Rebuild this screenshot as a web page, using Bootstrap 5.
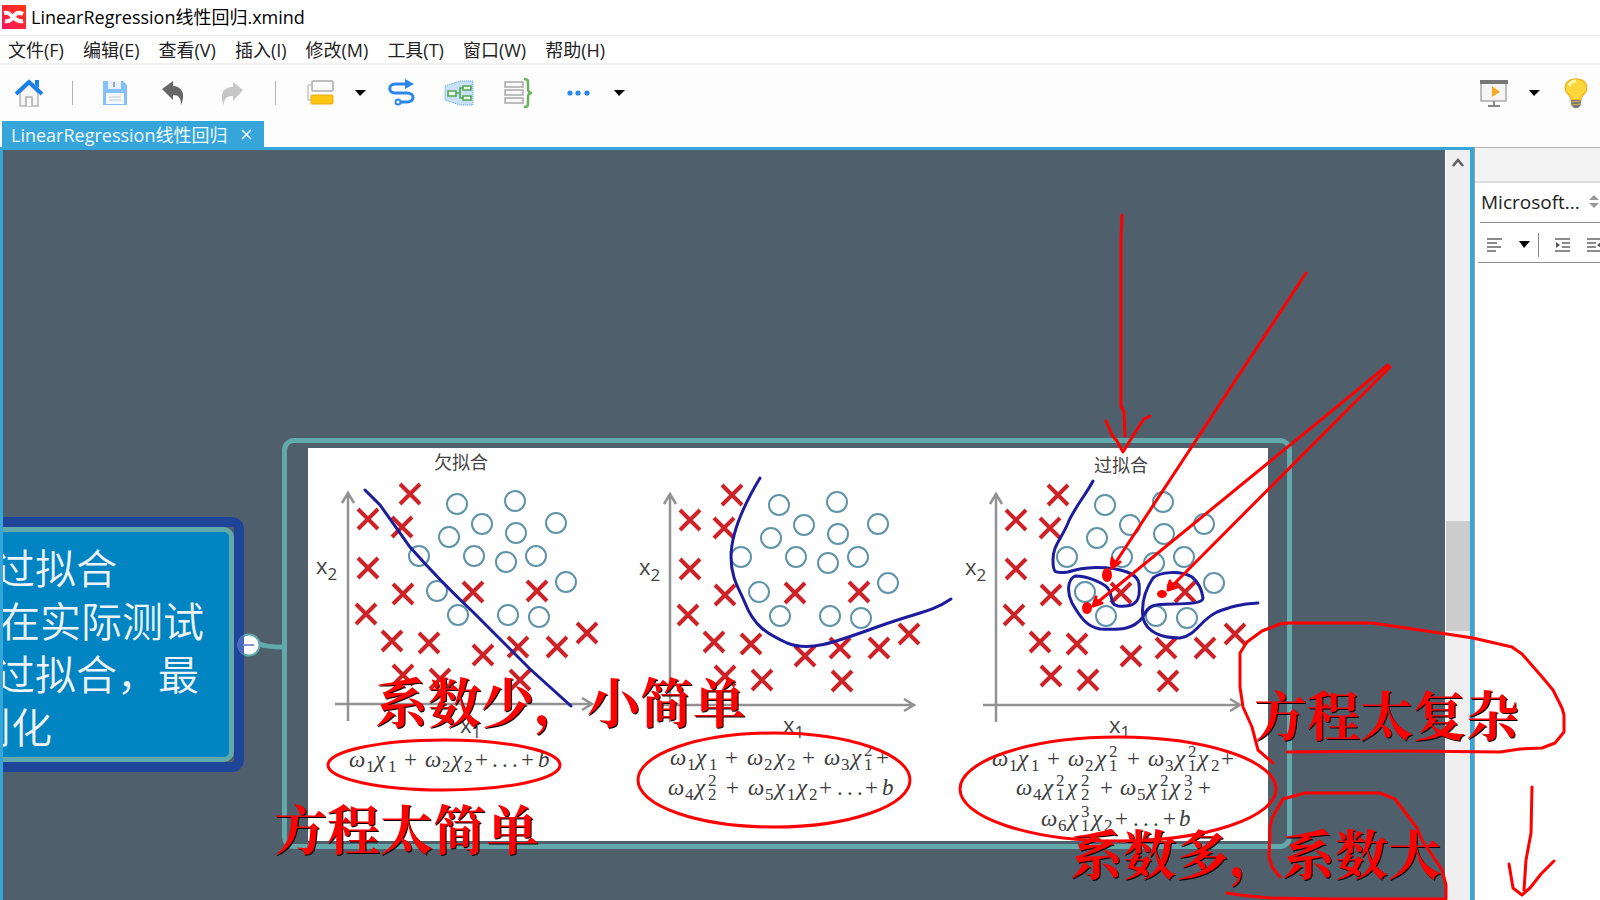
<!DOCTYPE html>
<html lang="zh-CN">
<head>
<meta charset="utf-8">
<meta name="viewport" content="width=device-width, initial-scale=1">
<title>LinearRegression线性回归.xmind</title>
<link href="https://cdn.jsdelivr.net/npm/bootstrap@5.3.0/dist/css/bootstrap.min.css" rel="stylesheet">
<style>
  body { font-family: "Open Sans", "Noto Sans CJK SC", sans-serif; font-size: 18px; line-height: 24px; color: #000; background: #fff; }
  .titlebar { height: 35px; padding: 0 0 2px 2px; gap: 5px; }
  .menubar { height: 30px; padding-left: 8px; gap: 19px; border-top: 1px solid #e8e8e8; border-bottom: 2px solid #f0f0f0; }
  .menubar a { color: #222; }
  .toolbar { height: 56px; padding-left: 14px; padding-right: 12px; background: #fdfdfd; }
  .tools { gap: 28px; }
  .tools button, .ends button, .panel button { border: 0; background: none; padding: 0; display: flex; }
  .pair { gap: 20px; }
  .rule { width: 1px; height: 24px; background: #b4b4b4; }
  .rule-dark { background: #888; }
  .tabs { height: 26px; padding-left: 2px; background: #fdfdfd; }
  .doc-tab { background: #35a5da; color: #f2fafe; padding: 1px 11px 0 9px; gap: 14px; }
  .doc-tab button { border: 0; background: none; padding: 0; display: flex; }
  .work { overflow: hidden; }
  .editor { border: solid #35a5da; border-width: 3px 4px 0 3px; }
  .board { background: #505f6c; overflow: hidden; min-width: 0; }
  .vscroll { width: 25px; background: #efefef; border-left: 1px solid #fff; }
  .thumb { height: 110px; margin-top: 353px; background: #cdcdcd; }
  .panel { width: 126px; border-left: 1px solid #a0a0a0; overflow: hidden; }
  .panel-head { height: 36px; background: #f3f3f3; border-top: 1px solid #b4b4b4; border-bottom: 2px solid #ddd; }
  .font-row { height: 40px; margin-left: 5px; padding-bottom: 2px; padding-left: 1px; border-bottom: 1px solid #909090; font-size: 19px; }
  .font-row button { color: #222; }
  .format-row { height: 40px; width: 140px; margin-left: 3px; padding-top: 4px; padding-left: 9px; border-bottom: 1px solid #909090; }
  .topic { left: -40px; top: 367px; width: 281px; border: 10px solid #1f4598; border-radius: 12px; background: #505f6c; }
  .topic-body { border: 5px solid #61a9ab; border-radius: 10px; background: #0084c2; color: #f0f4f8; font-size: 41px; line-height: 53px; font-weight: 350; padding: 10px 0 3px 16px; }
  .topic-body div { white-space: nowrap; }
  .shift { padding-left: 5px; }
  .outdent { margin-left: -24px; }
  .figure-box { left: 279px; top: 288px; width: 1010px; height: 411px; border: 5px solid #61a9ab; border-radius: 12px; padding: 5px 21px; }
  .ink { left: 0; top: 0; pointer-events: none; }
  .sans { font-family: "Open Sans", "Noto Sans CJK SC", sans-serif; fill: #444; }
  .fm { font-family: "Liberation Serif", serif; font-style: italic; font-size: 23px; fill: #3c3c3c; }
  .fm .idx { font-style: normal; font-size: 17px; }
  .fm .up { font-style: normal; }
  .note { font-family: "Noto Serif CJK SC", "Noto Sans CJK SC", serif; font-weight: 700; font-size: 53px; fill: #f00; text-shadow: 1px 1px 0 #000; }
</style>
</head>
<body>
<div class="d-flex flex-column vh-100 overflow-hidden">
  <header class="titlebar d-flex align-items-center">
    <svg width="24" height="24" viewBox="0 0 24 24"><defs><linearGradient id="lg" x1="0" y1="1" x2="1" y2="0"><stop offset="0" stop-color="#ff1260"/><stop offset="1" stop-color="#ff3a10"/></linearGradient></defs><path fill="url(#lg)" d="M0 0h24v24H0z"/><path d="M2 8c4-1 6 1 9 4s6 5 10 4M3 16c5 1 7-2 9-5s5-4 9-2" fill="none" stroke="#fff" stroke-width="4"/></svg>
    <span>LinearRegression线性回归.xmind</span>
  </header>
  <nav class="menubar d-flex align-items-center">
    <a class="text-decoration-none" href="#">文件(F)</a><a class="text-decoration-none" href="#">编辑(E)</a><a class="text-decoration-none" href="#">查看(V)</a><a class="text-decoration-none" href="#">插入(I)</a><a class="text-decoration-none" href="#">修改(M)</a><a class="text-decoration-none" href="#">工具(T)</a><a class="text-decoration-none" href="#">窗口(W)</a><a class="text-decoration-none" href="#">帮助(H)</a>
  </nav>
  <div class="toolbar d-flex align-items-center justify-content-between">
    <div class="tools d-flex align-items-center">
      <button aria-label="主页"><svg width="30" height="30" viewBox="0 0 30 30"><path d="M6 15v13h18V15l-9-9z" fill="#f6f6f6" stroke="#b5b5b5" stroke-width="1.5"/><path d="M12 28v-9h6v9" fill="#fff" stroke="#aaa" stroke-width="1.5"/><path d="M2 16 15 4l13 12" fill="none" stroke="#1b7fe8" stroke-width="4"/><path d="M21 2h4v8l-4-3z" fill="#1b7fe8"/></svg></button>
      <div class="rule"></div>
      <button aria-label="保存"><svg width="30" height="30" viewBox="0 0 30 30"><path d="M2 3h20l4 4v20H2z" fill="#85c0f8"/><path d="M7 3h13v8H7z" fill="#e8f0f8"/><path d="M13 4v5" stroke="#90a8c0" stroke-width="2"/><path d="M5 15h18v11H5z" fill="#f4f8fc"/><path d="M8 19h12M8 22h12" stroke="#c0cad4"/></svg></button>
      <button aria-label="撤销"><svg width="30" height="30" viewBox="0 0 30 30"><path d="M3 11 14 3v5c9 0 13 9 8 19 0-7-2-10-8-10v5z" fill="#686868"/></svg></button>
      <button aria-label="重做"><svg width="30" height="30" viewBox="0 0 30 30"><path d="M26 12 16 4v5C6 9 2 17 7 27c0-7 3-9 9-9v5z" fill="#c6c6c6"/></svg></button>
      <div class="rule"></div>
      <div class="pair d-flex align-items-center">
        <button aria-label="主题"><svg width="30" height="30" viewBox="0 0 30 30"><path d="M7 7H4v15h4" fill="none" stroke="#aaa"/><rect x="8" y="3" width="21" height="10" rx="1" fill="#fafafa" stroke="#aaa" stroke-width="1.5"/><rect x="7" y="17" width="22" height="9" rx="1" fill="#fcc613" stroke="#e5ab10"/></svg></button>
        <button aria-label="更多主题"><svg width="12" height="8"><path d="M1 1h11L6 7z"/></svg></button>
        <button aria-label="联系"><svg width="30" height="30" viewBox="0 0 30 30"><path d="M20 6H9c-7 0-7 9 0 9h12c8 0 8 9 0 9h-7" fill="none" stroke="#2b86ea" stroke-width="3"/><path d="m19 1 9 5-9 5z" fill="#2b86ea"/><circle cx="12" cy="24" r="2.5" fill="#fff" stroke="#2b86ea" stroke-width="2"/></svg></button>
      </div>
      <button aria-label="外框"><svg width="30" height="30" viewBox="0 0 30 30"><path d="M1 8 16 3h13v24H16L1 22z" fill="#c8e1f8" stroke="#4c9ae8" stroke-dasharray="1 1"/><g fill="#eaf7ea" stroke="#55a555" stroke-width="1.6"><path d="M12 15h4m4-5h-4v10h4" fill="none"/><path d="M4 13h8v5H4zM19 8h8v4h-8zM19 18h8v4h-8z"/></g></svg></button>
      <button aria-label="概要"><svg width="30" height="32" viewBox="0 0 30 32"><g fill="#fafafa" stroke="#aaa" stroke-width="1.5"><path d="M3 5h18v5H3zM3 13h18v5H3zM3 21h18v5H3z"/></g><path d="M22 2c4 0 4 1 4 5v5c0 2 1 4 4 4-3 0-4 2-4 4v5c0 4 0 5-4 5" fill="none" stroke="#6bb25c" stroke-width="2.5"/></svg></button>
      <div class="d-flex align-items-center pair ps-1">
        <button aria-label="更多"><svg width="30" height="8"><g fill="#2b86ea"><circle cx="6" cy="4" r="2.6"/><circle cx="14" cy="4" r="2.6"/><circle cx="23" cy="4" r="2.6"/></g></svg></button>
        <button aria-label="展开"><svg width="12" height="8"><path d="M0 1h11L5 7z"/></svg></button>
      </div>
    </div>
    <div class="ends pair d-flex align-items-center">
      <button aria-label="演示"><svg width="30" height="30" viewBox="0 0 30 30"><path d="M3 4h25v19H3z" fill="#f5f5f5" stroke="#aaa" stroke-width="1.5"/><path d="M2 2h28v4H2z" fill="#777"/><path d="m14 8 8 6-8 5z" fill="#f9a825"/><path d="M16 23v5M10 28h12" stroke="#888" stroke-width="2"/></svg></button>
      <button aria-label="演示选项"><svg width="12" height="7"><path d="M1 0h11L6 6z"/></svg></button>
      <button aria-label="提示" class="ms-1"><svg width="24" height="32" viewBox="0 0 24 32"><path d="M12 2C0 2-1 13 5 18q2 2 2 5h10q0-3 2-5c6-5 5-16-7-16" fill="#fdd63a" stroke="#eeb522" stroke-width="1.5"/><path d="M5 9q2-5 7-5" fill="none" stroke="#fff3a8" stroke-width="3"/><path d="M7 23h10v5l-3 3h-4l-3-3z" fill="#777"/><path d="m7 25 10-1M7 28l10-1" stroke="#d8b850"/></svg></button>
    </div>
  </div>
  <div class="tabs d-flex">
    <div class="doc-tab d-flex align-items-center"><span>LinearRegression线性回归</span><button aria-label="关闭"><svg width="12" height="12"><path d="m1 1 9 9m0-9-9 9" stroke="#fff" stroke-width="1.5"/></svg></button></div>
  </div>
  <div class="work d-flex flex-grow-1 position-relative">
    <main class="editor d-flex flex-grow-1">
      <div class="board flex-grow-1 position-relative">
        <div class="topic position-absolute"><div class="topic-body"><div>过拟合</div><div class="shift">在实际测试</div><div>过拟合，最</div><div class="outdent">则化</div></div></div>
        <svg class="position-absolute ink" width="290" height="560" viewBox="3 150 290 560"><path d="M259 644q8 3 24 3" fill="none" stroke="#61a9ab" stroke-width="5"/><circle cx="249" cy="645" r="10.500" fill="#fff" stroke="#61a9ab" stroke-width="2"/><path d="M244 635a11 11 0 0 0 0 20z" fill="#4b68c0"/><path d="M243 645h11" stroke="#8890d0" stroke-width="2"/></svg>
        <div class="figure-box position-absolute">
          <svg width="960" height="393" viewBox="308 448 960 393" class="d-block">
            <defs>
              <path id="cr" d="m-10-10 20 20m0-20-20 20" stroke="#cb2328" stroke-width="4"/>
              <g id="plot">
                <g fill="none" stroke="#929292" stroke-width="2.500"><path d="M348 721V494m-6 9 6-10 6 10M335 704h256m-9-6 10 6-10 6"/></g>
                <g fill="none" stroke="#5f93a8" stroke-width="2"><circle cx="457" cy="504" r="10"/><circle cx="515" cy="501" r="10"/><circle cx="482" cy="524" r="10"/><circle cx="556" cy="523" r="10"/><circle cx="516" cy="533" r="10"/><circle cx="449" cy="537" r="10"/><circle cx="419" cy="556" r="10"/><circle cx="474" cy="556" r="10"/><circle cx="506" cy="562" r="10"/><circle cx="536" cy="556" r="10"/><circle cx="566" cy="582" r="10"/><circle cx="437" cy="591" r="10"/><circle cx="458" cy="615" r="10"/><circle cx="508" cy="615" r="10"/><circle cx="539" cy="617" r="10"/></g>
                <use href="#cr" x="410" y="494"/><use href="#cr" x="368" y="519"/><use href="#cr" x="402" y="527"/><use href="#cr" x="368" y="568"/><use href="#cr" x="403" y="594"/><use href="#cr" x="366" y="614"/><use href="#cr" x="473" y="592"/><use href="#cr" x="537" y="591"/><use href="#cr" x="587" y="633"/><use href="#cr" x="392" y="641"/><use href="#cr" x="429" y="643"/><use href="#cr" x="483" y="655"/><use href="#cr" x="518" y="647"/><use href="#cr" x="557" y="647"/><use href="#cr" x="403" y="675"/><use href="#cr" x="440" y="679"/><use href="#cr" x="520" y="680"/>
              </g>
            </defs>
            <path d="M308 448h960v393H308z" fill="#fff"/>
            <use href="#plot"/><use href="#plot" x="322" y="1"/><use href="#plot" x="648" y="1"/>
            <g fill="none" stroke="#1c1c9c" stroke-width="3" stroke-linecap="round">
              <path d="M365 490 380 505 410 547Q440 581 473 612L530 669 571 706"/>
              <path d="M760 478C742 508 731 535 731 557S740 590 745 603C754 626 767 634 787 643C809 652 833 643 877 627S930 613 951 599"/>
              <path d="M1093 481C1087 493 1073 510 1068 523C1061 540 1053 545 1053 560C1053 574 1055 573 1068 572C1083 567 1107 565 1127 572C1140 577 1140 583 1139 595C1137 605 1130 607 1118 606C1110 605 1113 598 1109 590C1107 585 1090 576 1075 576C1067 580 1067 593 1072 603C1080 617 1087 627 1100 629C1120 630 1133 630 1143 617C1148 605 1153 604 1173 604C1190 604 1203 603 1203 598C1202 590 1198 582 1192 577C1180 570 1160 572 1153 578C1145 590 1141 603 1143 618C1147 633 1163 638 1180 638C1197 635 1200 620 1217 612C1230 607 1240 604 1258 603"/>
            </g>
            <g class="sans" font-size="18"><text x="434" y="469">欠拟合</text><text x="1094" y="472">过拟合</text></g>
            <g class="sans" font-size="22"><text x="316" y="574">x<tspan font-size="17" dy="6">2</tspan></text><text x="639" y="575">x<tspan font-size="17" dy="6">2</tspan></text><text x="965" y="575">x<tspan font-size="17" dy="6">2</tspan></text><text x="460" y="733">x<tspan font-size="17" dy="5">1</tspan></text><text x="783" y="733">x<tspan font-size="17" dy="5">1</tspan></text><text x="1109" y="733">x<tspan font-size="17" dy="5">1</tspan></text></g>
            <g class="fm" id="formulas"></g>
          </svg>
        </div>
      </div>
      <div class="vscroll flex-shrink-0 d-flex flex-column"><svg class="mx-auto mt-2" width="12" height="10"><path d="m1 8 5-6 5 6" fill="none" stroke="#606060" stroke-width="2.500"/></svg><div class="thumb"></div></div>
    </main>
    <aside class="panel flex-shrink-0 bg-white">
      <div class="panel-head"></div>
      <div class="font-row d-flex align-items-center"><button class="align-items-center">Microsoft...<svg class="ms-2" width="12" height="16"><path d="m1 6 5-5 5 5zM1 9h10l-5 5z" fill="#999"/></svg></button></div>
      <div class="format-row d-flex align-items-center">
        <button aria-label="对齐"><svg width="16" height="14"><path d="M0 1h15M0 5h10M0 9h14M0 13h9" stroke="#666" stroke-width="1.500"/></svg></button>
        <button aria-label="对齐选项" class="ms-3"><svg width="11" height="7"><path d="M0 0h11L5 7z"/></svg></button>
        <div class="ms-2 rule rule-dark"></div>
        <button aria-label="增加缩进" class="ms-3"><svg width="16" height="14"><path d="M0 1h15M7 5h8M7 9h8M0 13h15M1 7h3" stroke="#666" stroke-width="1.500"/><path d="m1 4 4 3-4 3z" fill="#555"/></svg></button>
        <button aria-label="减少缩进" class="ms-3"><svg width="16" height="14"><path d="M0 1h15M0 5h9M0 9h9M0 13h15" stroke="#666" stroke-width="1.500"/><path d="m14 4-4 3 4 3z" fill="#555"/></svg></button>
      </div>
    </aside>
    <svg class="position-absolute ink" width="1600" height="753" viewBox="0 147 1600 753">
      <g class="note"><text x="375" y="723">系数少，小简单</text><text x="274" y="850">方程太简单</text><text x="1254" y="736">方程太复杂</text><text x="1070" y="875">系数多，系数大</text></g>
      <g fill="none" stroke="#f00" stroke-width="3" stroke-linejoin="round" stroke-linecap="round">
        <ellipse cx="444" cy="765" rx="116" ry="25"/><ellipse cx="774" cy="780" rx="136" ry="47"/><ellipse cx="1118" cy="789" rx="158" ry="52"/>
        <path d="M1122 215 1121 239V406L1124 412 1125 436M1106 421 1112 435 1117 441 1123 452 1136 431 1144 419 1150 416"/>
        <path d="M1306 273 1112 568M1112 558v10l8-6M1388 365 1093 606M1096 597l-3 9 9-3M1390 367 1168 590M1170 581l-2 9 9-3"/>
        <path d="M1273 763 1258 750 1252 727 1243 707 1240 687V653L1247 642 1262 631 1280 624 1288 623H1372L1440 633 1473 638 1512 647 1522 654 1543 678 1553 690 1562 708 1564 715V732L1555 743 1542 748 1520 749 1500 752 1405 751 1287 752"/>
        <path d="M1280 877 1272 867 1269 857 1270 827 1272 818 1283 799 1305 793H1380L1395 799 1417 828 1422 840 1442 870 1446 885V898M1227 893 1240 895 1270 898 1330 899H1446"/>
        <path d="M1532 787 1531 833 1526 860 1524 890M1509 864 1513 888 1522 895 1530 888 1541 874 1554 861"/>
      </g>
      <g fill="#f00"><ellipse cx="1107" cy="575" rx="5" ry="7"/><ellipse cx="1087" cy="608" rx="5" ry="6"/><ellipse cx="1113" cy="563" rx="3" ry="4"/><ellipse cx="1097" cy="602" rx="4" ry="3"/><ellipse cx="1171" cy="586" rx="4" ry="4"/><ellipse cx="1162" cy="594" rx="5" ry="4"/></g>
    </svg>
  </div>
</div>
<script src="https://cdn.jsdelivr.net/npm/bootstrap@5.3.0/dist/js/bootstrap.bundle.min.js"></script>
<script>
  // Each token is an x position followed by a symbol; "_" marks an index, "^" a power.
  const formulas = [
    [767, '349ω 366_1 375χ 388_1 404+ 425ω 442_2 452χ 464_2 475+ 492. 502. 512. 521+ 538b'],
    [765, '670ω 687_1 696χ 709_1 725+ 747ω 764_2 775χ 787_2 802+ 824ω 841_3 851χ 864_1 864^2 876+'],
    [795, '668ω 685_4 695χ 708_2 708^2 726+ 748ω 765_5 775χ 787_1 797χ 809_2 819+ 837. 847. 857. 865+ 882b'],
    [766, '992ω 1009_1 1018χ 1031_1 1047+ 1068ω 1085_2 1096χ 1109_1 1109^2 1127+ 1148ω 1165_3 1175χ 1188_1 1188^2 1198χ 1211_2 1221+'],
    [795, '1016ω 1033_4 1043χ 1056_1 1056^2 1067χ 1081_2 1081^2 1100+ 1120ω 1137_5 1147χ 1160_1 1160^2 1170χ 1184_2 1184^3 1198+'],
    [826, '1041ω 1058_6 1068χ 1081_1 1081^3 1092χ 1104_2 1115+ 1133. 1143. 1153. 1163+ 1179b']
  ];
  document.getElementById('formulas').innerHTML = formulas.map(([y, s]) =>
    '<text>' + s.split(' ').map(t => {
      const [, x, k, c] = t.match(/^(\d+)([_^]?)(.+)$/);
      const cls = k ? 'idx' : c === '+' || c === '.' ? 'up' : '';
      return `<tspan class="${cls}" x="${x}" y="${y + (k === '_' ? 5 : k === '^' ? -9 : 0)}">${c}</tspan>`;
    }).join('') + '</text>').join('');
</script>
</body>
</html>
